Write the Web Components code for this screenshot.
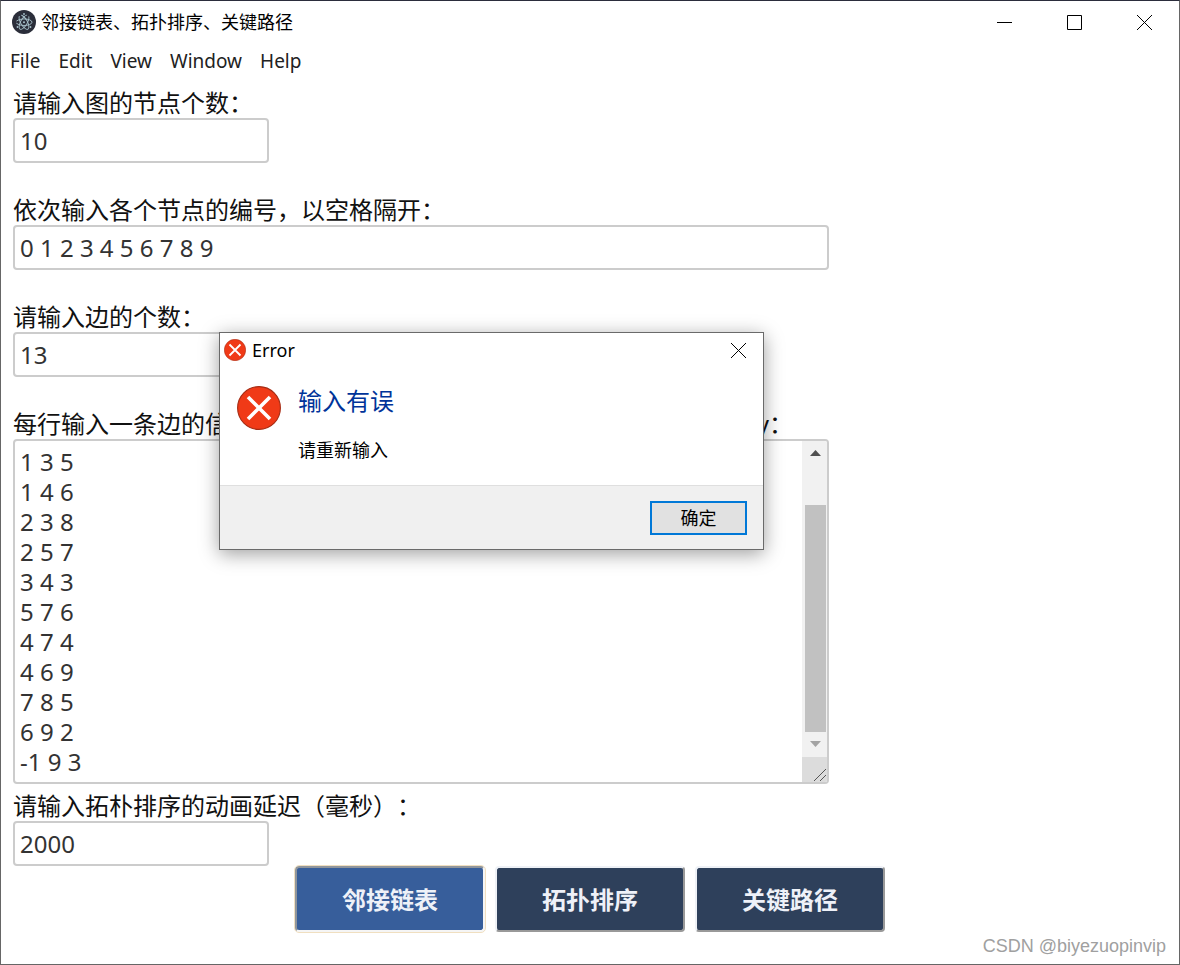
<!DOCTYPE html>
<html lang="zh-CN">
<head>
<meta charset="utf-8">
<title>邻接链表、拓扑排序、关键路径</title>
<style>
  body {
    margin: 0;
    font-family: "Noto Sans", "Noto Sans CJK SC", sans-serif;
    font-size: 24px;
    color: #111;
    text-spacing-trim: space-all;
  }
</style>
</head>
<body>
<app-window></app-window>

<script>
const controlReset = `
  * { box-sizing: border-box; }
  button, input, textarea { font: inherit; margin: 0; }
`;

function attach(host, html) {
  const template = document.createElement('template');
  template.innerHTML = html;
  const root = host.attachShadow({ mode: 'open' });
  root.appendChild(template.content.cloneNode(true));
  return root;
}

class WindowIcon extends HTMLElement {
  constructor() {
    super();
    const shapes = {
      minimize: '<path d="M0 7.5H15"/>',
      maximize: '<path d="M.5 .5H14.5V14.5H.5Z"/>',
      close: '<path d="M0 0L15 15M15 0L0 15"/>',
    };
    attach(this, `
      <style>
        :host { display: block; width: 15px; height: 15px; }
        svg { display: block; fill: none; stroke: #000; stroke-width: 1; }
      </style>
      <svg width="15" height="15" viewBox="0 0 15 15">${shapes[this.getAttribute('name')]}</svg>
    `);
  }
}

class ErrorIcon extends HTMLElement {
  constructor() {
    super();
    attach(this, `
      <style>
        :host { display: block; flex: none; }
        svg { display: block; width: 100%; height: 100%; }
      </style>
      <svg viewBox="0 0 44 44">
        <circle cx="22" cy="22" r="21.4" fill="#f03a17" stroke="#a52c14" stroke-width="1.1"/>
        <path d="M11 11L33 33M33 11L11 33" stroke="#fff" stroke-width="3.6"/>
      </svg>
    `);
  }
}

class TitleBar extends HTMLElement {
  constructor() {
    super();
    attach(this, `
      <style>
        ${controlReset}
        :host { display: flex; align-items: center; height: 42px; padding-left: 11px; font-size: 18px; color: #000; }
        .title { flex: 1; margin-left: 5px; line-height: 24px; }
        .controls { display: flex; }
        .controls button {
          display: grid; place-items: center;
          width: 70px; height: 42px; padding: 0; border: none; background: none;
        }
      </style>
      <svg width="24" height="24" viewBox="0 0 24 24">
        <circle cx="12" cy="12" r="12" fill="#2b2e3a"/>
        <g fill="none" stroke="#a9c3cc" stroke-width=".9" stroke-linecap="round">
          <ellipse cx="12" cy="12.200" rx="8" ry="3.300" stroke-dasharray="17 3"/>
          <ellipse cx="12" cy="12.200" rx="8" ry="3.300" stroke-dasharray="17 3" transform="rotate(60 12 12.200)"/>
          <ellipse cx="12" cy="12.200" rx="8" ry="3.300" stroke-dasharray="17 3" transform="rotate(120 12 12.200)"/>
        </g>
        <g fill="#a9c3cc">
          <circle cx="12" cy="12.200" r="1"/>
          <circle cx="18.500" cy="17" r=".9"/>
          <circle cx="5.500" cy="17" r=".9"/>
          <circle cx="12" cy="4" r=".9"/>
        </g>
      </svg>
      <div class="title"><slot></slot></div>
      <div class="controls">
        <button aria-label="最小化"><window-icon name="minimize"></window-icon></button>
        <button aria-label="最大化"><window-icon name="maximize"></window-icon></button>
        <button aria-label="关闭"><window-icon name="close"></window-icon></button>
      </div>
    `);
  }
}

class MenuBar extends HTMLElement {
  constructor() {
    super();
    const items = this.getAttribute('items').split(',');
    attach(this, `
      <style>
        ${controlReset}
        :host { display: block; }
        nav { display: flex; align-items: center; gap: 18px; height: 36px; padding-left: 9px; }
        button { padding: 0; border: none; background: none; color: #222; font-size: 19px; line-height: 24px; }
      </style>
      <nav>${items.map((item) => `<button>${item}</button>`).join('')}</nav>
    `);
  }
}

class TextField extends HTMLElement {
  constructor() {
    super();
    attach(this, `
      <style>
        ${controlReset}
        :host { display: block; }
        label { display: block; line-height: 30px; }
        input {
          display: block; width: 256px; max-width: 100%; height: 45px; padding: 0 5px;
          border: 2px solid #ccc; border-radius: 4px; background: #fff; color: #333; outline: none;
        }
        :host([wide]) input { width: 100%; }
      </style>
      <label for="field"><slot></slot></label>
      <input id="field" type="text" value="${this.getAttribute('value')}">
    `);
  }
}

class EdgeList extends HTMLElement {
  constructor() {
    super();
    attach(this, `
      <style>
        ${controlReset}
        :host { display: block; }
        label { display: flex; justify-content: space-between; padding-right: 36px; line-height: 30px; }
        .box {
          display: flex; height: 345px; overflow: hidden;
          border: 2px solid #ccc; border-radius: 4px; background: #fff;
        }
        textarea {
          flex: 1; min-width: 0; padding: 6px 5px; border: none; outline: none; resize: none; overflow: hidden;
          background: none; color: #333; line-height: 30px;
        }
        .bar { display: flex; flex-direction: column; width: 25px; background: #f1f1f1; }
        .bar svg { display: block; flex: none; }
        .before { height: 39px; }
        .thumb { flex: 1; margin: 0 1px 0 3px; background: #c1c1c1; }
      </style>
      <label for="edges"><slot></slot><slot name="end"></slot></label>
      <div class="box">
        <textarea id="edges">${this.getAttribute('value')}</textarea>
        <div class="bar">
          <svg width="25" height="25" viewBox="0 0 25 25"><path d="M8 15L13.500 9L19 15Z" fill="#505050"/></svg>
          <div class="before"></div>
          <div class="thumb"></div>
          <svg width="25" height="25" viewBox="0 0 25 25"><path d="M8 9L13.500 15L19 9Z" fill="#a3a3a3"/></svg>
          <svg width="25" height="25" viewBox="0 0 25 25">
            <path d="M0 0H25V25H0Z" fill="#dcdcdc"/>
            <path d="M12 24L24 12M18 24L24 18" stroke="#555" stroke-width="1"/>
          </svg>
        </div>
      </div>
    `);
  }
}

class ActionButton extends HTMLElement {
  constructor() {
    super();
    attach(this, `
      <style>
        ${controlReset}
        :host { display: block; }
        button {
          display: block; width: 190px; height: 66px; padding: 2px 0 0;
          border: 2px solid; border-color: #eef1f6 #999 #999 #eef1f6; border-radius: 4px;
          background: #2e405b; color: #eef1f8; font-weight: 700; line-height: 30px;
        }
        :host([active]) button {
          border-color: #8f959c #f5f5f5 #f5f5f5 #8f959c;
          background: #375e9b; outline: 1px solid #f0dfc0;
        }
      </style>
      <button><slot></slot></button>
    `);
  }
}

class ErrorDialog extends HTMLElement {
  constructor() {
    super();
    attach(this, `
      <style>
        ${controlReset}
        :host {
          display: block; position: absolute; left: 218px; top: 331px; width: 545px; box-sizing: border-box;
          border: 1px solid #6a6a6a; background: #fff; color: #000; font-size: 18px; line-height: 24px;
          box-shadow: 0 4px 18px rgba(0, 0, 0, .38);
        }
        header { display: flex; align-items: center; height: 34px; padding-left: 4px; }
        header error-icon { width: 22px; height: 22px; }
        header span { flex: 1; margin-left: 6px; }
        .close { display: grid; place-items: center; width: 49px; height: 34px; padding: 0; border: none; background: none; }
        .content { display: flex; gap: 17px; height: 118px; padding: 19px 17px; }
        .content error-icon { width: 44px; height: 44px; }
        h1 { margin: 0; color: #003399; font-size: 24px; font-weight: 400; line-height: 30px; }
        p { margin: 22px 0 0; }
        footer {
          display: flex; justify-content: flex-end; align-items: center; height: 64px; padding-right: 16px;
          border-top: 1px solid #dfdfdf; background: #f0f0f0;
        }
        footer button { width: 97px; height: 34px; padding: 0; border: 2px solid #0078d7; background: #e1e1e1; color: #000; }
      </style>
      <section role="alertdialog" aria-labelledby="heading">
        <header>
          <error-icon></error-icon>
          <span>Error</span>
          <button class="close" aria-label="关闭"><window-icon name="close"></window-icon></button>
        </header>
        <div class="content">
          <error-icon></error-icon>
          <div>
            <h1 id="heading"><slot name="heading"></slot></h1>
            <p><slot></slot></p>
          </div>
        </div>
        <footer><button class="ok">确定</button></footer>
      </section>
    `);
  }

  connectedCallback() {
    this.shadowRoot.querySelectorAll('button').forEach((button) => {
      button.addEventListener('click', () => this.remove());
    });
  }
}

class AppWindow extends HTMLElement {
  constructor() {
    super();
    attach(this, `
      <style>
        :host {
          display: block; position: relative; box-sizing: border-box; min-height: 100vh;
          border: 1px solid #666; border-top-color: #2b2d3c; background: #fff;
        }
        main { padding: 9px 12px 0; }
        form { display: flex; flex-direction: column; gap: 32px; max-width: 816px; }
        .delay { margin-top: 7px; }
        .actions { display: flex; justify-content: center; gap: 10px; }
        .watermark {
          position: absolute; right: 13px; bottom: 6px;
          color: #a0a0a0; font-family: "Liberation Sans", sans-serif; font-size: 18px; line-height: 24px;
        }
      </style>
      <title-bar>邻接链表、拓扑排序、关键路径</title-bar>
      <menu-bar items="File,Edit,View,Window,Help"></menu-bar>
      <main>
        <form>
          <text-field value="10">请输入图的节点个数：</text-field>
          <text-field wide value="0 1 2 3 4 5 6 7 8 9">依次输入各个节点的编号，以空格隔开：</text-field>
          <text-field value="13">请输入边的个数：</text-field>
          <edge-list value="1 3 5
1 4 6
2 3 8
2 5 7
3 4 3
5 7 6
4 7 4
4 6 9
7 8 5
6 9 2
-1 9 3">每行输入一条边的信<span slot="end">y：</span></edge-list>
        </form>
        <text-field class="delay" value="2000">请输入拓朴排序的动画延迟（毫秒）：</text-field>
        <div class="actions">
          <action-button active>邻接链表</action-button>
          <action-button>拓扑排序</action-button>
          <action-button>关键路径</action-button>
        </div>
      </main>
      <div class="watermark">CSDN @biyezuopinvip</div>
      <error-dialog><span slot="heading">输入有误</span>请重新输入</error-dialog>
    `);
  }
}

customElements.define('window-icon', WindowIcon);
customElements.define('error-icon', ErrorIcon);
customElements.define('title-bar', TitleBar);
customElements.define('menu-bar', MenuBar);
customElements.define('text-field', TextField);
customElements.define('edge-list', EdgeList);
customElements.define('action-button', ActionButton);
customElements.define('error-dialog', ErrorDialog);
customElements.define('app-window', AppWindow);
</script>
</body>
</html>
